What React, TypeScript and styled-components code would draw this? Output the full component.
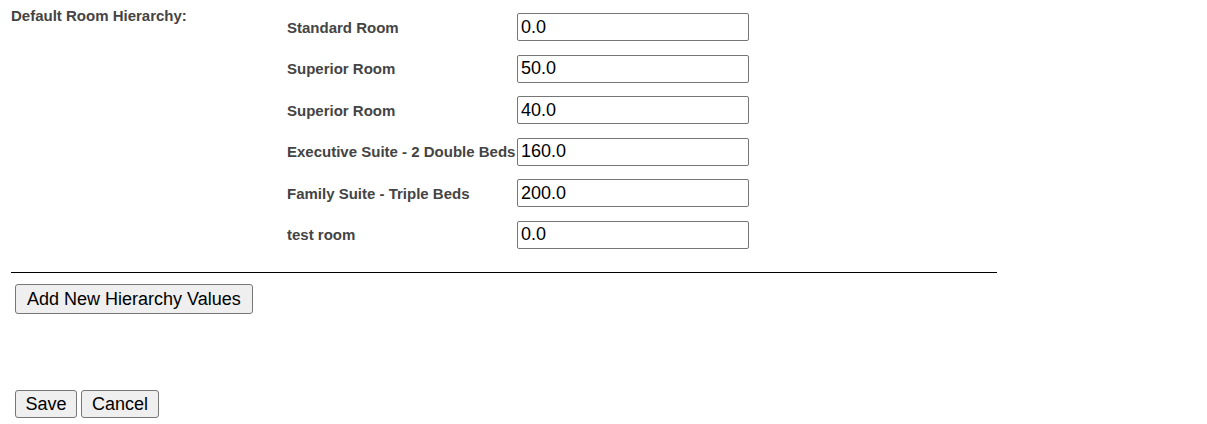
import React from "react";
import styled, { createGlobalStyle } from "styled-components";

const Global = createGlobalStyle`
  html, body { margin: 0; padding: 0; background: #fff; }
  body { font-family: "Liberation Sans", Arial, sans-serif; }
`;

const Page = styled.div`
  padding: 6px 0 0 11px;
  width: 1196px;
  box-sizing: border-box;
`;

const Section = styled.div`
  display: grid;
  grid-template-columns: 276px auto;
  align-items: start;
`;

const Title = styled.div`
  font-size: 15px;
  font-weight: bold;
  color: #444;
  line-height: 17px;
  padding-top: 1px;
`;

const Rows = styled.div`
  display: grid;
  grid-template-columns: 230px 232px;
  grid-auto-rows: 41.5px;
  align-items: center;
  padding-top: 0.5px;
`;

const Label = styled.div`
  font-size: 15px;
  font-weight: bold;
  color: #444;
  white-space: nowrap;
  line-height: 17px;
`;

const ValueInput = styled.input`
  box-sizing: border-box;
  width: 232px;
  height: 28px;
  border: 1px solid #767676;
  border-radius: 2px;
  padding: 0 3px;
  font-family: "Liberation Sans", Arial, sans-serif;
  font-size: 18px;
  color: #000;
  background: #fff;
  outline: none;
`;

const Rule = styled.div`
  width: 986px;
  height: 1px;
  background: #000;
  margin-top: 16px;
`;

const Button = styled.button<{ $h?: number; $px?: number }>`
  box-sizing: border-box;
  height: ${(p) => p.$h ?? 28}px;
  background: #efefef;
  border: 1px solid #767676;
  border-radius: 3px;
  padding: 0 ${(p) => p.$px ?? 10}px;
  font-family: "Liberation Sans", Arial, sans-serif;
  font-size: 18px;
  color: #000;
  line-height: 20px;
`;

const AddRow = styled.div`
  margin: 11px 0 0 4px;
  display: flex;
`;

const ActionRow = styled.div`
  margin: 76px 0 0 4px;
  display: flex;
  gap: 4px;
`;

const rooms: [string, string][] = [
  ["Standard Room", "0.0"],
  ["Superior Room", "50.0"],
  ["Superior Room", "40.0"],
  ["Executive Suite - 2 Double Beds", "160.0"],
  ["Family Suite - Triple Beds", "200.0"],
  ["test room", "0.0"],
];

export default function App() {
  return (
    <>
      <Global />
      <Page>
        <Section>
          <Title>Default Room Hierarchy:</Title>
          <Rows>
            {rooms.map(([name, val], i) => (
              <React.Fragment key={i}>
                <Label>{name}</Label>
                <ValueInput defaultValue={val} />
              </React.Fragment>
            ))}
          </Rows>
        </Section>
        <Rule />
        <AddRow>
          <Button $h={30} $px={11}>Add New Hierarchy Values</Button>
        </AddRow>
        <ActionRow>
          <Button $px={9.5}>Save</Button>
          <Button $px={10}>Cancel</Button>
        </ActionRow>
      </Page>
    </>
  );
}
